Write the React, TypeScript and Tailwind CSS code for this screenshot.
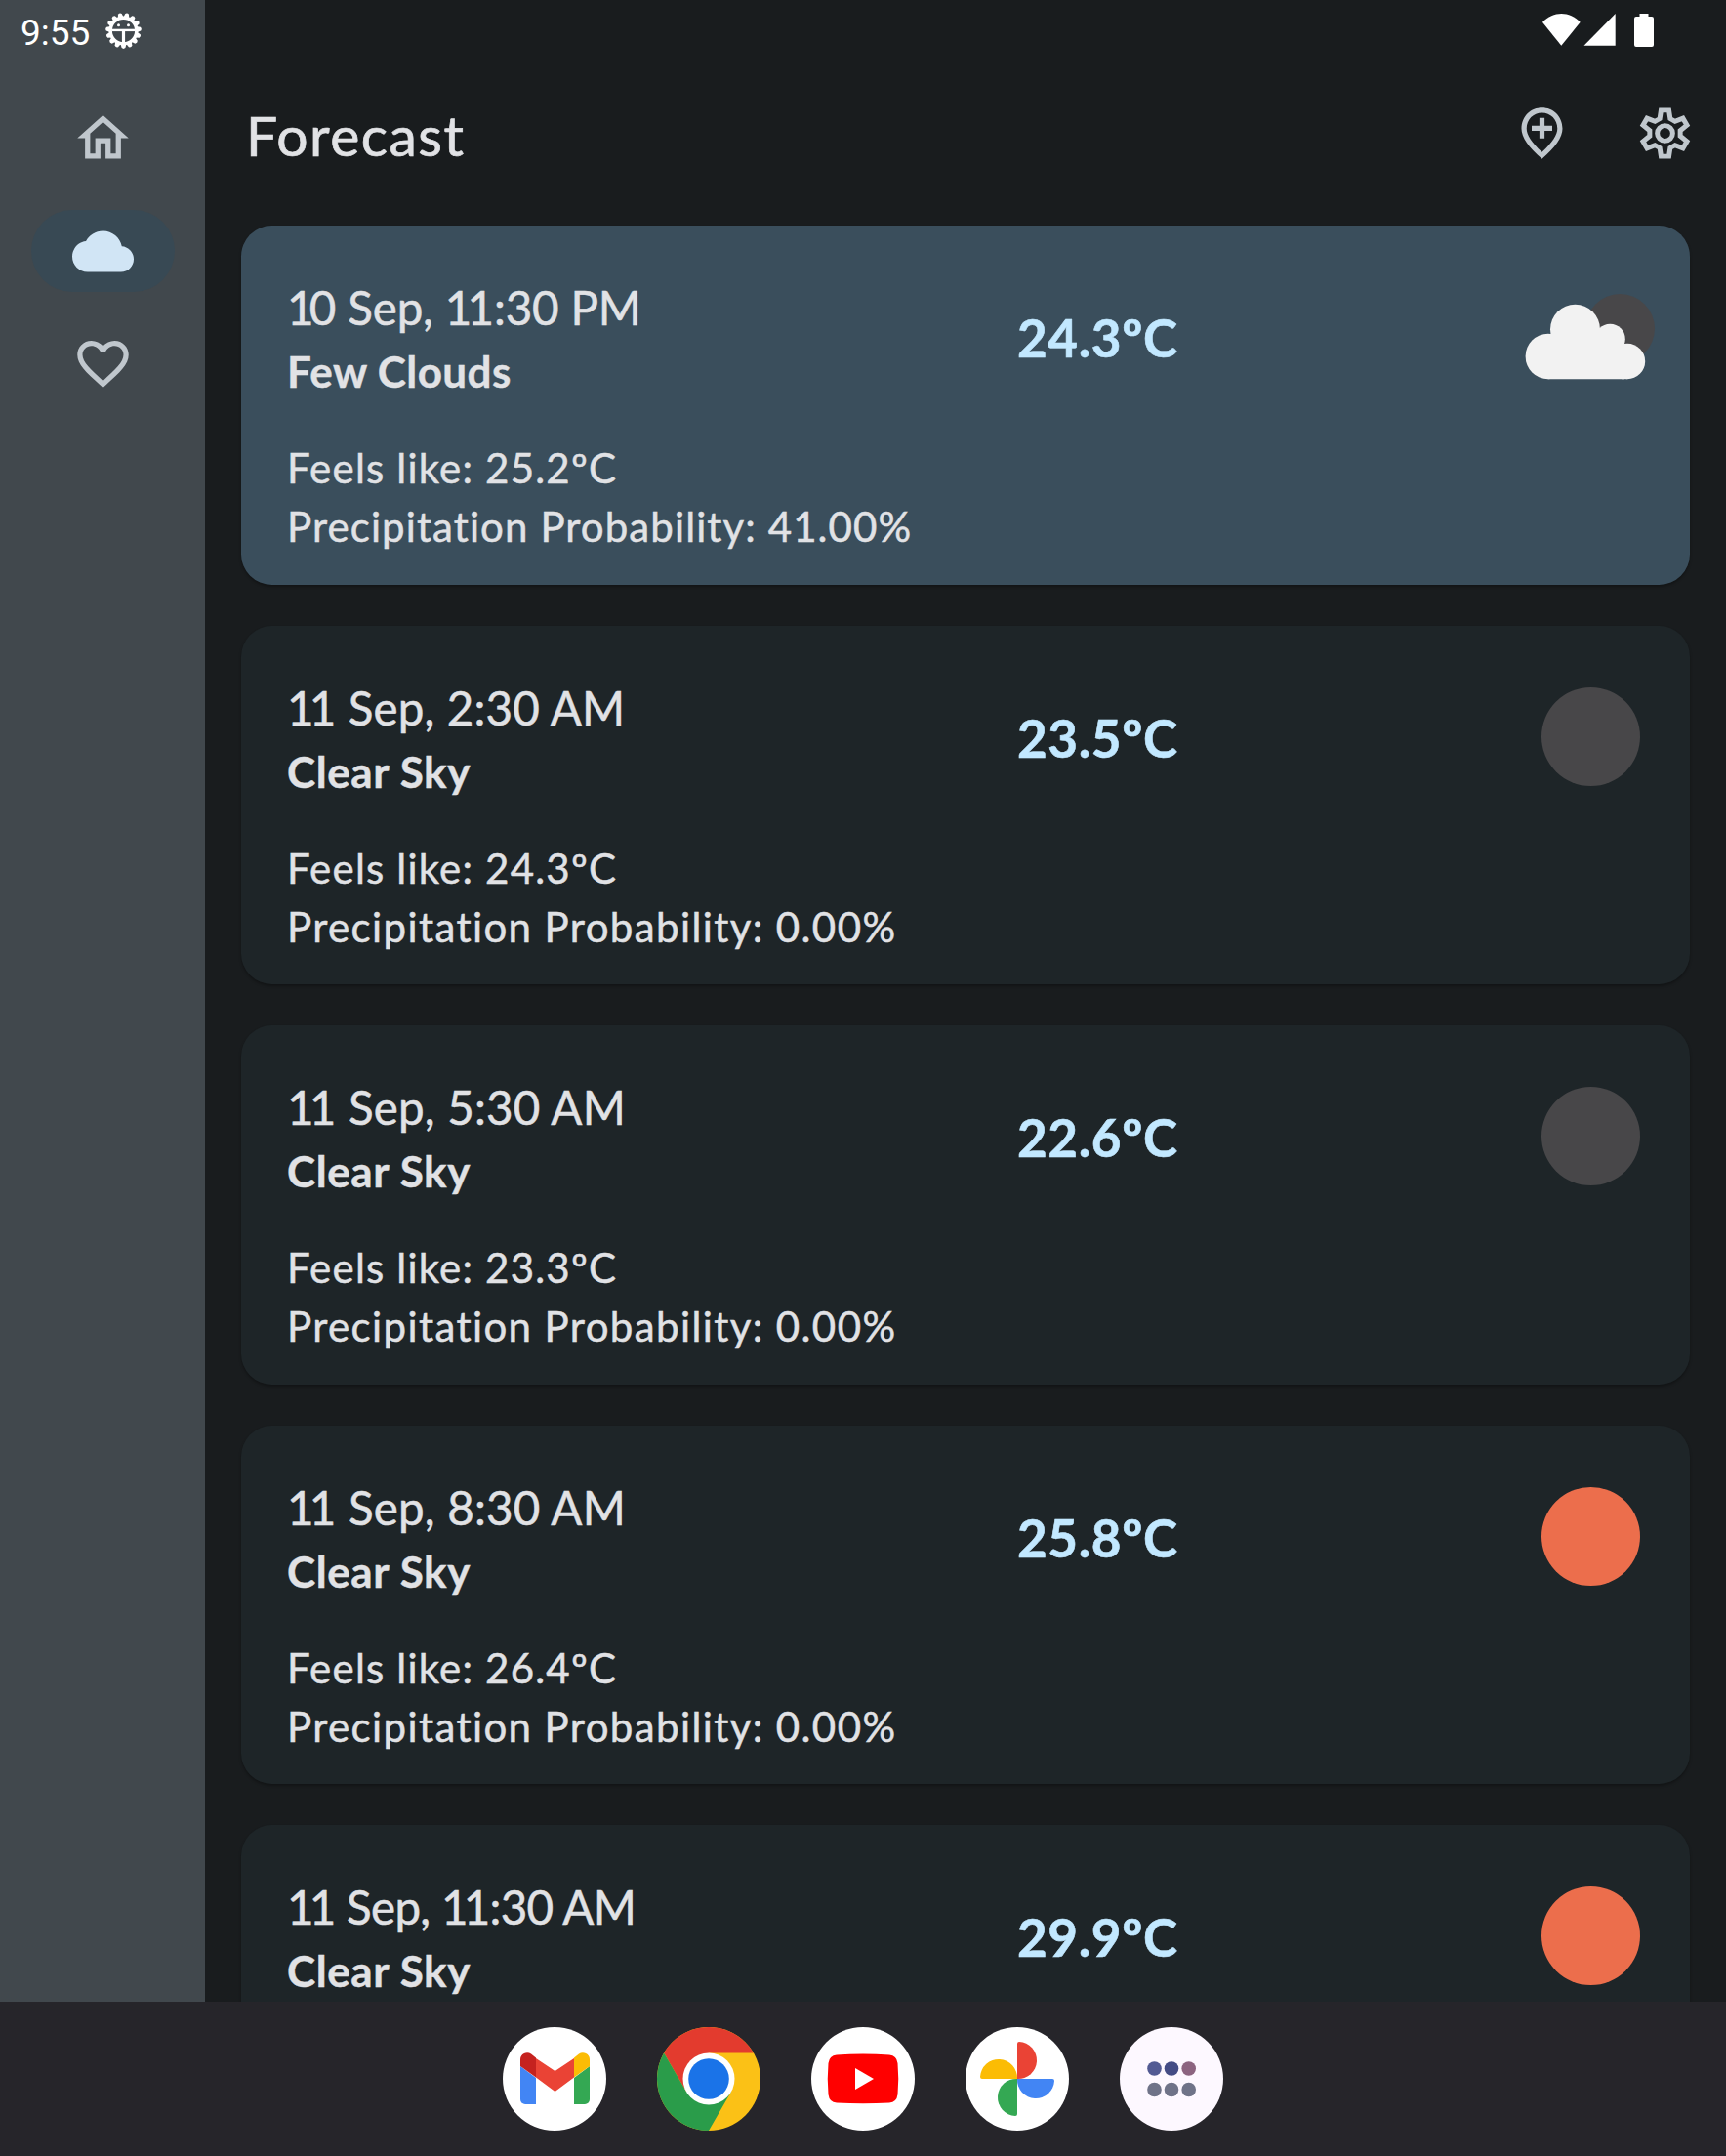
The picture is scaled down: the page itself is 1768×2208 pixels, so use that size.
import { ReactNode } from "react";

type Kind = "fewClouds" | "night" | "day";

type Entry = {
  date: string; dateLs: string; title: string; titleLs: string;
  temp: string; feels?: string; rain?: string; rainLs?: string; kind: Kind; active?: boolean;
};

const entries: Entry[] = [
  { date: "10 Sep, 11:30 PM", dateLs: "tracking-[-0.15px]", title: "Few Clouds", titleLs: "tracking-[0.4px]", temp: "24.3ºC", feels: "25.2ºC", rain: "41.00%", rainLs: "tracking-[1.1px]", kind: "fewClouds", active: true },
  { date: "11 Sep, 2:30 AM", dateLs: "tracking-[0.15px]", title: "Clear Sky", titleLs: "tracking-[0.6px]", temp: "23.5ºC", feels: "24.3ºC", rain: "0.00%", rainLs: "tracking-[1.4px]", kind: "night" },
  { date: "11 Sep, 5:30 AM", dateLs: "tracking-[0.2px]", title: "Clear Sky", titleLs: "tracking-[0.6px]", temp: "22.6ºC", feels: "23.3ºC", rain: "0.00%", rainLs: "tracking-[1.4px]", kind: "night" },
  { date: "11 Sep, 8:30 AM", dateLs: "tracking-[0.2px]", title: "Clear Sky", titleLs: "tracking-[0.6px]", temp: "25.8ºC", feels: "26.4ºC", rain: "0.00%", rainLs: "tracking-[1.4px]", kind: "day" },
  { date: "11 Sep, 11:30 AM", dateLs: "tracking-[-0.7px]", title: "Clear Sky", titleLs: "tracking-[0.6px]", temp: "29.9ºC", kind: "day" },
];

/* Tightens the digit 1 where another figure follows it. */
function Figures({ text }: { text: string }) {
  return (
    <>
      {text.split(/(1(?=\d))/).map((part, i) =>
        i % 2 === 1 ? <span key={i} className="tracking-[-0.1em]">1</span> : part
      )}
    </>
  );
}

function NavIcon({ d, active }: { d: string; active?: boolean }) {
  return (
    <div className={`flex h-[84px] w-[147px] items-center justify-center rounded-full ${active ? "bg-[#384954] text-[#d1e5f5]" : "text-[#c0c7cd]"}`}>
      <svg viewBox="0 0 24 24" className="size-[63px]" fill="currentColor"><path d={d} /></svg>
    </div>
  );
}

function BugIcon() {
  const teeth = Array.from({ length: 15 }, (_, i) => i * 24 + 12);
  return (
    <svg viewBox="-18.500 -18.500 37 37" className="size-[37px]">
      {teeth.map((a) => (
        <path key={a} d="M-3-13.500 L-1.900-17.600 Q0-19.200 1.900-17.600 L3-13.500Z" fill="#fff" transform={`rotate(${a})`} />
      ))}
      <circle r="13.300" fill="none" stroke="#fff" strokeWidth="3.400" />
      <path d="M-12-0.600H12" stroke="#fff" strokeWidth="2.400" />
      <path d="M0-1V14" stroke="#fff" strokeWidth="3.200" />
      <circle cx="-5" cy="-5.800" r="1.500" fill="#fff" /><circle cx="5" cy="-5.800" r="1.500" fill="#fff" />
    </svg>
  );
}

function GearIcon() {
  return (
    <svg viewBox="-12 -12 24 24" className="size-[63px]" fill="none" stroke="currentColor" strokeWidth="1.900">
      <path d="M-1.550-9H1.550L2.050-5.700L3.910-4.630L7.020-5.840L8.570-3.160L5.960-1.070V1.070L8.570 3.160L7.020 5.840L3.910 4.630L2.050 5.700L1.550 9H-1.550L-2.050 5.700L-3.910 4.630L-7.020 5.840L-8.570 3.160L-5.960 1.070V-1.070L-8.570-3.160L-7.020-5.840L-3.910-4.630L-2.050-5.700Z" />
      <circle r="3" />
    </svg>
  );
}

function WeatherIcon({ kind }: { kind: Kind }) {
  if (kind === "fewClouds")
    return (
      <svg viewBox="0 0 134 90" className="mt-[69px] mr-[34px] h-[90px] w-[134px] overflow-visible">
        <circle cx="96.500" cy="36.500" r="35.500" fill="#484749" />
        <g fill="#f2f2f2">
          <circle cx="22.800" cy="65" r="23.200" />
          <circle cx="50.500" cy="37.300" r="25.500" />
          <circle cx="86.300" cy="47.200" r="15.500" />
          <circle cx="104" cy="70" r="18.200" />
          <path d="M22.800 88.200V42H26V37H75.500L86 36L101 50V88.200Z" />
          <path d="M98 60H104V88.200H98Z" />
        </g>
      </svg>
    );
  return <div className={`mt-[63px] mr-[51px] size-[101px] rounded-full ${kind === "night" ? "bg-[#484749]" : "bg-[#ec6e4c]"}`} />;
}

function AppIcon({ children, bg = "#fff" }: { children: ReactNode; bg?: string }) {
  return (
    <svg viewBox="0 0 106 106" className="size-[106px]">
      <circle cx="53" cy="53" r="53" fill={bg} />
      {children}
    </svg>
  );
}

export default function App() {
  return (
    <div className="flex h-[2208px] w-[1768px] flex-col overflow-hidden bg-[#191c1e] font-['Lato',sans-serif] text-[#e1e2e5]">
      <div className="flex h-[2050px]">
        <aside className="flex w-[210px] shrink-0 flex-col bg-[#41484d]">
          <div className="flex h-[66px] items-center gap-[16px] pl-[21px] font-['Roboto',sans-serif] text-[37px] leading-none text-white">
            <span>9:55</span>
            <div className="-mt-[3px]"><BugIcon /></div>
          </div>
          <nav className="mt-[33.500px] flex flex-col items-center gap-[31.500px]">
            <NavIcon d="M12 5.690l5 4.500V18h-2v-6H9v6H7v-7.810l5-4.500M12 3L2 12h3v8h6v-6h2v6h6v-8h3L12 3z" />
            <NavIcon active d="M19.350 10.040C18.670 6.590 15.640 4 12 4 9.110 4 6.600 5.640 5.350 8.040 2.340 8.360 0 10.910 0 14c0 3.310 2.690 6 6 6h13c2.760 0 5-2.240 5-5 0-2.640-2.050-4.780-4.650-4.960z" />
            <NavIcon d="M16.500 3c-1.740 0-3.410.81-4.500 2.090C10.910 3.810 9.240 3 7.500 3 4.420 3 2 5.420 2 8.500c0 3.780 3.400 6.860 8.550 11.540L12 21.350l1.450-1.320C18.600 15.360 22 12.280 22 8.500 22 5.420 19.580 3 16.500 3zm-4.400 15.550l-.1.1-.1-.1C7.140 14.240 4 11.390 4 8.500 4 6.500 5.500 5 7.500 5c1.540 0 3.040.99 3.570 2.360h1.870C13.460 5.990 14.960 5 16.500 5c2 0 3.500 1.500 3.500 3.500 0 2.890-3.140 5.740-7.900 10.050z" />
          </nav>
        </aside>

        <main className="flex flex-1 flex-col overflow-hidden">
          <div className="flex h-[66px] shrink-0 justify-end pt-[14px] pr-[74px]">
            <svg viewBox="0 0 114 34" className="h-[34px] w-[114px]" fill="#fff">
              <path d="M0 8.700C11-2.900 28-2.900 38.700 8.700L19.300 32.700Z" />
              <path d="M42.500 32.700L74.700 0V32.700Z" />
              <path d="M99.500 0h9v3h3.500a2 2 0 0 1 2 2v27a2 2 0 0 1-2 2H96a2 2 0 0 1-2-2V5a2 2 0 0 1 2-2h3.500Z" />
            </svg>
          </div>
          <header className="flex h-[165px] shrink-0 items-start justify-between pl-[42px] pr-[31.500px]">
            <h1 className="mt-[38px] text-[57px] leading-[68px] tracking-[1.5px] [-webkit-text-stroke:0.7px_#e1e2e5]">Forecast</h1>
            <div className="mt-[39px] flex gap-[63px] text-[#c0c7cd]">
              <svg viewBox="0 0 24 24" className="size-[63px]" fill="currentColor">
                <path d="M13 6v3h3v2h-3v3h-2v-3H8V9h3V6h2zm5 4.200C18 6.570 15.350 4 12 4s-6 2.570-6 6.200c0 2.340 1.950 5.440 6 9.140 4.050-3.700 6-6.800 6-9.140zM12 2c4.200 0 8 3.220 8 8.200 0 3.320-2.670 7.250-8 11.800-5.330-4.550-8-8.480-8-11.800C4 5.220 7.800 2 12 2z" />
              </svg>
              <GearIcon />
            </div>
          </header>

          <section className="flex flex-col gap-[42px] pl-[37px] pr-[37px]">
            {entries.map((e) => (
              <article key={e.date} className={`flex h-[367.500px] shrink-0 rounded-[31.500px] pl-[47px] shadow-[0_2px_3px_rgba(0,0,0,0.3)] ${e.active ? "bg-[#3a4e5c]" : "bg-[#1e2528]"}`}>
                <div className="flex w-[748px] flex-col pt-[54px] whitespace-nowrap">
                  <p className={`h-[67px] text-[47.500px] leading-[60px] [-webkit-text-stroke:0.5px_#e1e2e5] ${e.dateLs}`}><Figures text={e.date} /></p>
                  <p className={`h-[97px] text-[44px] leading-[56px] font-bold [-webkit-text-stroke:0.4px_#e1e2e5] ${e.titleLs}`}>{e.title}</p>
                  {e.feels && <p className="h-[60px] text-[42px] leading-[60px] tracking-[1.2px] [-webkit-text-stroke:0.5px_#e1e2e5]">Feels like: {e.feels}</p>}
                  {e.rain && <p className={`h-[60px] text-[42px] leading-[60px] [-webkit-text-stroke:0.5px_#e1e2e5] ${e.rainLs}`}>Precipitation Probability: {e.rain}</p>}
                </div>
                <p className="mt-[83px] text-[53px] leading-[64px] font-bold tracking-[0.6px] text-[#c2e8ff] [-webkit-text-stroke:0.6px_#c2e8ff]">{e.temp}</p>
                <div className="ml-auto"><WeatherIcon kind={e.kind} /></div>
              </article>
            ))}
          </section>
        </main>
      </div>

      <footer className="flex h-[158px] shrink-0 items-center justify-center gap-[52px] bg-[#26252a]">
        <AppIcon>
          <path d="M18 40L34 52V79H23a5 5 0 0 1-5-5Z" fill="#4285f4" />
          <path d="M73 52L89 40V74a5 5 0 0 1-5 5H73Z" fill="#34a853" />
          <path d="M34 32L53.500 45L73 32V51.500L53.500 66L34 51.500Z" fill="#ea4335" />
          <path d="M18 40V33A7 7 0 0 1 29 27.500L34 31.500V51.500Z" fill="#c5221f" />
          <path d="M89 40V33A7 7 0 0 0 78 27.500L73 31.500V51.500Z" fill="#fbbc04" />
        </AppIcon>
        <AppIcon bg="#fbc116">
          <path d="M53 26.500H98.900A53 53 0 0 0 7.100 26.500L30 66Z" fill="#e33b2e" />
          <path d="M7.100 26.500A53 53 0 0 0 53 106L75.900 66.300L53 53L30 66Z" fill="#2a9c4a" />
          <circle cx="53" cy="53" r="26.500" fill="#fff" />
          <circle cx="53" cy="53" r="20.800" fill="#1a73e8" />
        </AppIcon>
        <AppIcon>
          <path d="M26 28.500Q53 26.500 80 28.500Q87.500 29 88.500 37Q90 53 88.500 69Q87.500 77 80 77.500Q53 79 26 77.500Q18.500 77 17.500 69Q16 53 17.500 37Q18.500 29 26 28.500Z" fill="#f00" />
          <path d="M45 42L64 53L45 64Z" fill="#fff" />
        </AppIcon>
        <AppIcon>
          <path d="M53 53V17Q53 15 55 15A19 19 0 0 1 53 53Z" fill="#ea4335" />
          <path d="M53 53H89Q91 53 91 55A19 19 0 0 1 53 53Z" fill="#4285f4" />
          <path d="M53 53V89Q53 91 51 91A19 19 0 0 1 53 53Z" fill="#34a853" />
          <path d="M53 53H17Q15 53 15 51A19 19 0 0 1 53 53Z" fill="#fbbc04" />
        </AppIcon>
        <AppIcon bg="#fdf8ff">
          <circle cx="35.500" cy="42.500" r="7.300" fill="#525a93" />
          <circle cx="53" cy="42.500" r="7.300" fill="#444c85" />
          <circle cx="70.700" cy="42.500" r="7.300" fill="#8c6480" />
          <circle cx="35.500" cy="64" r="7.300" fill="#6f7388" />
          <circle cx="53" cy="64" r="7.300" fill="#6f7388" />
          <circle cx="70.700" cy="64" r="7.300" fill="#6f7388" />
        </AppIcon>
      </footer>
    </div>
  );
}
